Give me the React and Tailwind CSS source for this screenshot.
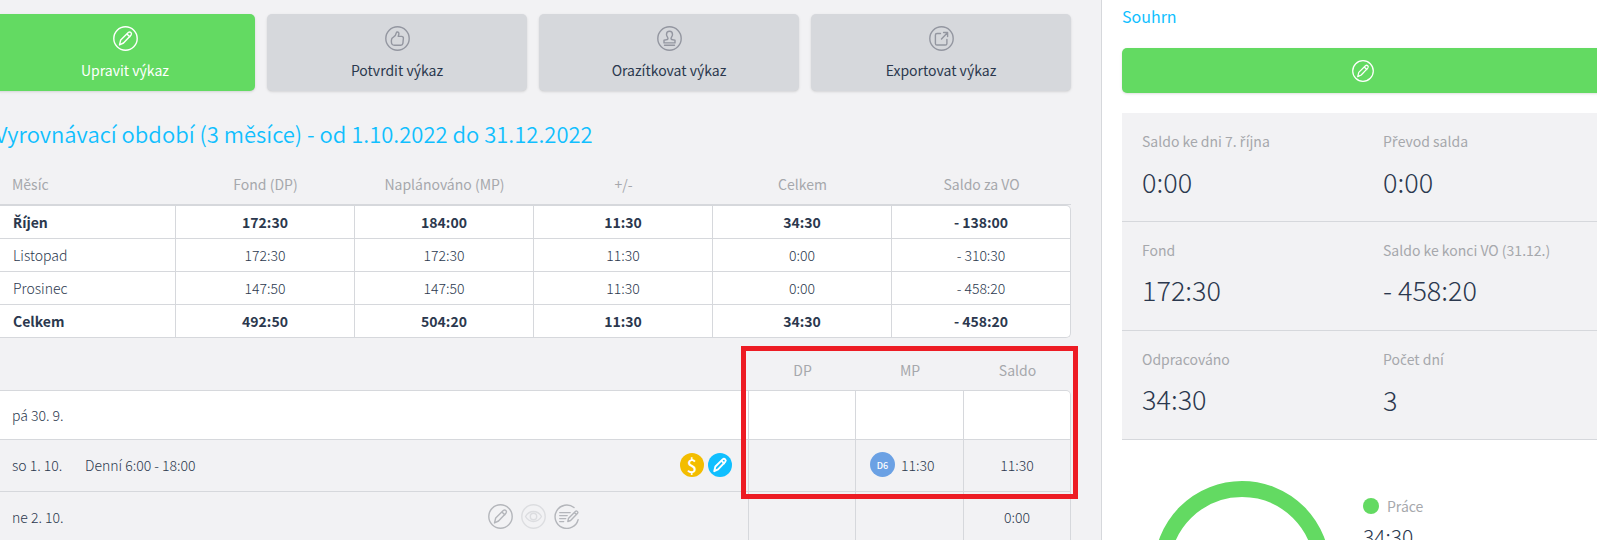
import React from 'react';

const months = [
  { name: 'Říjen', fund: '172:30', planned: '184:00', diff: '11:30', total: '34:30', balance: '- 138:00', bold: true },
  { name: 'Listopad', fund: '172:30', planned: '172:30', diff: '11:30', total: '0:00', balance: '- 310:30' },
  { name: 'Prosinec', fund: '147:50', planned: '147:50', diff: '11:30', total: '0:00', balance: '- 458:20' },
  { name: 'Celkem', fund: '492:50', planned: '504:20', diff: '11:30', total: '34:30', balance: '- 458:20', bold: true },
];

const summary = [
  { label: 'Saldo ke dni 7. října', value: '0:00' },
  { label: 'Převod salda', value: '0:00' },
  { label: 'Fond', value: '172:30' },
  { label: 'Saldo ke konci VO (31.12.)', value: '- 458:20' },
  { label: 'Odpracováno', value: '34:30' },
  { label: 'Počet dní', value: '3' },
];

// The main font has no glyphs for r and c with a caron, so take them from Noto Sans
function czech(text) {
  return text.split(/([řŘčČ])/).map((part, i) =>
    i % 2 ? <span key={i} className="font-['Noto_Sans',sans-serif]">{part}</span> : part
  );
}

// Outlined circle shared by all the action icons
function CircleIcon({ className, ring = true, children }) {
  return (
    <svg viewBox="0 0 25 25" fill="none" stroke="currentColor" strokeWidth="1.4" strokeLinecap="round" strokeLinejoin="round" className={className} aria-hidden="true">
      {ring && <circle cx="12.5" cy="12.5" r="11.7" />}
      {children}
    </svg>
  );
}

function PencilShape() {
  return (
    <>
      <path d="M6.5 18.9l1.2-4.9 7.6-7.4c.8-.8 1.9-.7 2.6 0s.7 1.8 0 2.6l-7.4 7.8z" />
      <path d="M14.2 8.2l2.6 2.6" />
    </>
  );
}

function ThumbShape() {
  return (
    <path d="M8.4 11.2c1.8-.9 2.6-2.8 2.9-4.3.3-1.3 2.6-1.2 2.6.6 0 1.1-.3 2-.7 2.9h3.4c1.3 0 1.9.9 1.8 1.9l-.5 5c-.2 1.2-.9 1.9-2.1 1.9H9.4c-2.1 0-3-1.2-3-3.1v-1.900c0-1.300.7-2.400 2-3z" />
  );
}

function StampShape() {
  return (
    <>
      <path d="M11 12.600c0-1.400-1.500-2.200-1.500-4.200 0-1.900 1.200-3.100 3-3.100s3 1.200 3 3.100c0 2-1.500 2.800-1.500 4.200 0 1.300 1.500 1.500 4 1.600v2.700H7v-2.700c2.500-.1 4-.3 4-1.600z" />
      <path d="M7.500 19.300h10" />
    </>
  );
}

function ExportShape() {
  return (
    <>
      <path d="M11.500 7.500H8c-1 0-1.600.6-1.600 1.600v8.300c0 1 .6 1.600 1.600 1.600h8.300c1 0 1.600-.6 1.600-1.600v-4" />
      <path d="M12.500 12.900l5.900-6.200M14.600 6.500h4v4" />
    </>
  );
}

function EyeShape() {
  return (
    <>
      <path d="M4.500 12.500c4-6.600 12-6.600 16 0-4 6.600-12 6.600-16 0z" />
      <circle cx="12.500" cy="12.500" r="3.200" />
    </>
  );
}

function NoteShape() {
  return (
    <>
      <path d="M20 3.500a11.700 11.700 0 1 0 4.100 12.200" />
      <path d="M5.700 8.600h10.500M5.700 11.600h7.500M5.700 14.600h6M5.700 17.600h4" />
      <path d="M13.800 17.500l.8-3.300 7-7c.9-.9 2.900.8 2 2l-7 7.300zM20.300 8.400l2.100 2" />
    </>
  );
}

const actions = [
  { label: 'Upravit výkaz', shape: <PencilShape />, style: 'bg-[#63da62] text-white', icon: 'text-white' },
  { label: 'Potvrdit výkaz', shape: <ThumbShape />, style: 'bg-[#d6d8dc] text-[#2b384e]', icon: 'text-[#9396a0]' },
  { label: 'Orazítkovat výkaz', shape: <StampShape />, style: 'bg-[#d6d8dc] text-[#2b384e]', icon: 'text-[#9396a0]' },
  { label: 'Exportovat výkaz', shape: <ExportShape />, style: 'bg-[#d6d8dc] text-[#2b384e]', icon: 'text-[#9396a0]' },
];

function MonthTable() {
  return (
    <table className="mt-[25px] w-full table-fixed border-separate border-spacing-0 text-center">
      <thead>
        <tr className="h-[31px] text-[#a6a8ac]">
          {['Měsíc', 'Fond (DP)', 'Naplánováno (MP)', '+/-', 'Celkem', 'Saldo za VO'].map((title) => (
            <th key={title} scope="col" className="border-b border-[#d6d8dc] p-0 align-top font-normal leading-5 first:w-[181px] first:pl-[17px] first:text-left">
              {title}
            </th>
          ))}
        </tr>
      </thead>
      <tbody>
        {months.map((m, i) => {
          const cell = 'border-r border-b border-[#d6d8dc] bg-white p-0 leading-5';
          const top = i === 0 ? ' h-[34px] border-t' : ' h-[33px]';
          const end = i === 0 ? ' rounded-tr-[5px]' : i === months.length - 1 ? ' rounded-br-[5px]' : '';
          return (
            <tr key={m.name} className={m.bold ? 'font-bold' : 'font-light'}>
              <td className={cell + top + ' pl-[18px] text-left'}>{czech(m.name)}</td>
              <td className={cell + top}>{m.fund}</td>
              <td className={cell + top}>{m.planned}</td>
              <td className={cell + top}>{m.diff}</td>
              <td className={cell + top}>{m.total}</td>
              <td className={cell + top + end}>{m.balance}</td>
            </tr>
          );
        })}
      </tbody>
    </table>
  );
}

function DayTable() {
  const cell = 'border-r border-b border-[#d6d8dc] p-0';
  return (
    <div className="relative">
      <table className="w-full table-fixed border-separate border-spacing-0 text-center">
        <thead>
          <tr className="h-[52px] text-[#a6a8ac]">
            <td className="p-0" />
            <th scope="col" className="w-[107px] p-0 pt-[22px] align-top font-normal leading-5">DP</th>
            <th scope="col" className="w-[108px] p-0 pt-[22px] align-top font-normal leading-5">MP</th>
            <th scope="col" className="w-[107px] p-0 pt-[22px] align-top font-normal leading-5">Saldo</th>
          </tr>
        </thead>
        <tbody className="font-light">
          <tr className="h-[50px] bg-white">
            <td className={cell + ' border-t pl-[17px] text-left'}>pá 30. 9.</td>
            <td className={cell + ' border-t'} />
            <td className={cell + ' border-t'} />
            <td className={cell + ' rounded-tr-[5px] border-t'} />
          </tr>
          <tr className="h-[52px]">
            <td className={cell + ' pr-4 pb-[2px] pl-[17px] text-left'}>
              <div className="flex items-center">
                <span className="w-[73px]">so 1. 10.</span>
                <span className="flex-1">Denní 6:00 - 18:00</span>
                <span className="flex items-center gap-1">
                  <span className="flex size-6 items-center justify-center rounded-full bg-[#f3bd00] text-lg leading-6 font-medium text-white">$</span>
                  <button type="button" aria-label="Upravit směnu" className="size-6 rounded-full bg-[#10bfff] text-white">
                    <CircleIcon ring={false} className="size-6 stroke-2">
                      <PencilShape />
                    </CircleIcon>
                  </button>
                </span>
              </div>
            </td>
            <td className={cell} />
            <td className={cell + ' pb-[2px]'}>
              <div className="flex items-center gap-[6px] pl-[14px]">
                <span className="flex size-[25px] items-center justify-center rounded-full bg-[#6ba1e4] pt-px text-[9px] leading-none font-medium text-white">D6</span>
                11:30
              </div>
            </td>
            <td className={cell + ' pb-[2px]'}>11:30</td>
          </tr>
          <tr className="h-[52px]">
            <td className={cell + ' pr-4 pb-[2px] pl-[17px] text-left'}>
              <div className="flex items-center">
                <span className="w-[73px]">ne 2. 10.</span>
                <span className="flex flex-1 justify-end gap-2 text-[#b4b6bb]">
                  <button type="button" aria-label="Upravit den">
                    <CircleIcon className="size-[25px]"><PencilShape /></CircleIcon>
                  </button>
                  <button type="button" aria-label="Zobrazit den" className="text-[#dcdde0]">
                    <CircleIcon className="size-[25px]"><EyeShape /></CircleIcon>
                  </button>
                  <button type="button" aria-label="Přidat poznámku">
                    <CircleIcon ring={false} className="size-[25px]"><NoteShape /></CircleIcon>
                  </button>
                </span>
                <span className="w-[153px]" />
              </div>
            </td>
            <td className={cell} />
            <td className={cell} />
            <td className={cell + ' pb-[2px]'}>0:00</td>
          </tr>
        </tbody>
      </table>
      {/* Red frame around the DP / MP / Saldo columns */}
      <div className="pointer-events-none absolute top-2 -right-[7px] h-[153px] w-[337px] border-5 border-[#ed1c24]" />
    </div>
  );
}

function Sidebar() {
  return (
    <aside className="w-[523px] shrink-0 border-l border-[#d6d8dc] bg-white px-5 pt-1">
      <h2 className="text-base leading-6 text-[#10bfff]">Souhrn</h2>
      <button type="button" aria-label="Upravit" className="mt-5 flex h-[45px] w-full items-center justify-center rounded-[5px] bg-[#63da62] text-white shadow-sm">
        <CircleIcon className="size-[22px]"><PencilShape /></CircleIcon>
      </button>
      <dl className="mt-5 grid grid-cols-2 bg-[#f2f2f4]">
        {summary.map((item) => (
          <div key={item.label} className="h-[109px] border-b border-[#d6d8dc] pt-[18px] pl-5">
            <dt className="leading-5 text-[#a6a8ac]">{czech(item.label)}</dt>
            <dd className="mt-3 text-[27px] leading-9 font-light">{item.value}</dd>
          </div>
        ))}
      </dl>
      <div className="flex pt-[41px] pl-8">
        <svg viewBox="0 0 176 176" className="size-44 shrink-0" role="img" aria-label="Práce 34:30">
          <circle cx="88" cy="88" r="80" fill="none" stroke="#63da62" strokeWidth="16" />
        </svg>
        <div className="ml-[33px] pt-[15px]">
          <div className="flex items-center gap-2 leading-5 text-[#a6a8ac]">
            <span className="size-4 rounded-full bg-[#63da62]" />
            Práce
          </div>
          <div className="mt-[6px] text-[21px] leading-7 font-light">34:30</div>
        </div>
      </div>
    </aside>
  );
}

function App() {
  return (
    <div className="h-screen overflow-hidden bg-[#f2f2f4] font-['Noto_Sans_CJK_SC',sans-serif] text-sm text-[#2b384e]">
      <div className="-mr-[27px] -ml-[5px] flex min-h-full">
        <main className="min-w-0 flex-1 pt-[14px] pr-[30px]">
          <div className="grid grid-cols-4 gap-3">
            {actions.map((a) => (
              <button key={a.label} type="button" className={'flex h-[77px] flex-col items-center gap-[9px] rounded-[5px] pt-3 shadow-sm ' + a.style}>
                <CircleIcon className={'size-[25px] ' + a.icon}>{a.shape}</CircleIcon>
                <span className="leading-5">{a.label}</span>
              </button>
            ))}
          </div>
          <h1 className="mt-[26px] text-[22px] leading-8 font-[350] text-[#10bfff]">
            Vyrovnávací období (3 měsíce) - od 1.10.2022 do 31.12.2022
          </h1>
          <MonthTable />
          <DayTable />
        </main>
        <Sidebar />
      </div>
    </div>
  );
}

export default App;
